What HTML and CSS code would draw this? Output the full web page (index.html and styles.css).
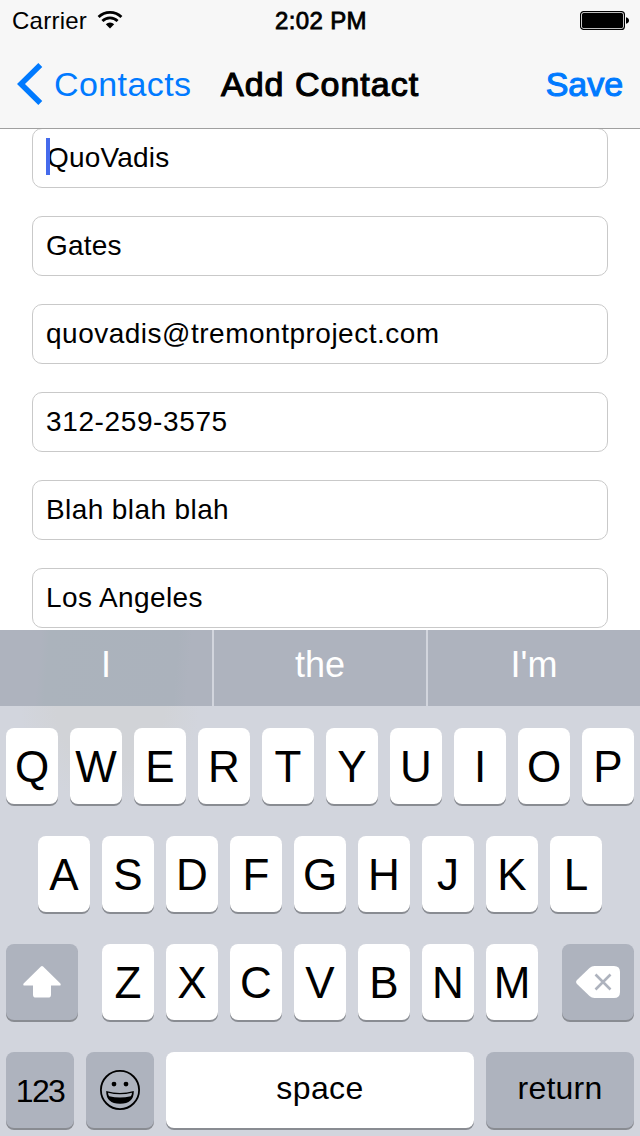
FILE: index.html
```html
<!DOCTYPE html>
<html lang="en">
<head>
<meta charset="utf-8">
<title>Add Contact</title>
<link rel="stylesheet" href="styles.css">
</head>
<body>
<div class="screen">
  <header class="header">
    <div class="status">
      <div class="status-left"><span class="carrier">Carrier</span>
        <svg class="wifi" width="26" height="20" viewBox="0 0 26 20"><g fill="none" stroke="#000" stroke-width="2.8"><path d="M1.6 7.1A16.2 16.2 0 0 1 24.4 7.1"/><path d="M5.4 11.1A10.8 10.8 0 0 1 20.6 11.1"/></g><path d="M8.8 14.2A6 6 0 0 1 17.2 14.2L13 18.6Z"/></svg>
      </div>
      <span class="time">2:02 PM</span>
      <svg class="battery" width="50" height="20" viewBox="0 0 50 20"><rect x=".6" y=".6" width="43.8" height="17.8" rx="3" fill="#fff" stroke="#000" stroke-width="1.2"/><rect x="2" y="2" width="41" height="15" rx="1.5"/><path d="M46 6.2Q49 7 49 9.5T46 12.8Z"/></svg>
    </div>
    <nav class="nav">
      <a class="back"><svg width="26" height="42" viewBox="0 0 26 42"><path d="M23.3 2L4 21L23.3 40" fill="none" stroke="#007aff" stroke-width="5.6"/></svg><span class="back-label">Contacts</span></a>
      <h1 class="title">Add Contact</h1>
      <a class="save">Save</a>
    </nav>
  </header>
  <main class="form">
    <div class="field first-name"><span class="caret"></span>QuoVadis</div>
    <div class="field last-name">Gates</div>
    <div class="field email">quovadis@tremontproject.com</div>
    <div class="field phone">312-259-3575</div>
    <div class="field">Blah blah blah</div>
    <div class="field">Los Angeles</div>
  </main>
  <section class="keyboard">
    <div class="suggestions"><div>I</div><div>the</div><div>I'm</div></div>
    <div class="keys">
      <div class="row"><b class="key">Q</b><b class="key">W</b><b class="key">E</b><b class="key">R</b><b class="key">T</b><b class="key">Y</b><b class="key">U</b><b class="key">I</b><b class="key">O</b><b class="key">P</b></div>
      <div class="row"><b class="key">A</b><b class="key">S</b><b class="key">D</b><b class="key">F</b><b class="key">G</b><b class="key">H</b><b class="key">J</b><b class="key">K</b><b class="key">L</b></div>
      <div class="row spread">
        <b class="key dark wide"><svg width="40" height="34" viewBox="0 0 40 34"><path fill="#fff" d="M18.9 1.6Q20 .6 21.1 1.6L38.4 18.4Q39.4 20.4 37.5 20.4H29V29.4Q29 32.6 26 32.6H14Q11 32.6 11 29.4V20.4H2.5Q.6 20.4 1.6 18.4Z"/></svg></b>
        <div class="row"><b class="key">Z</b><b class="key">X</b><b class="key">C</b><b class="key">V</b><b class="key">B</b><b class="key">N</b><b class="key">M</b></div>
        <b class="key dark wide"><svg width="44" height="34" viewBox="0 0 44 34"><path fill="#fff" d="M1 15L13.5 3Q15.7 1 18.5 1H38Q44 1 44 7V27Q44 33 38 33H18.5Q15.7 33 13.5 31L1 19Q-.8 17 1 15Z"/><path d="M19.5 9.5L34.5 24.5M34.5 9.5L19.5 24.5" stroke="#aeb3be" stroke-width="2.6"/></svg></b>
      </div>
      <div class="row">
        <b class="key dark numbers">123</b>
        <b class="key dark emoji"><svg width="40" height="40" viewBox="0 0 40 40"><circle cx="20" cy="20" r="19.1" fill="none" stroke="#000" stroke-width="1.8"/><circle cx="14" cy="14.1" r="2.4"/><circle cx="26" cy="14.1" r="2.4"/><path d="M6.2 21Q20 24.8 33.8 21Q34 33.8 20 33.8T6.2 21Z"/><path fill="#aeb3be" d="M8 22.7Q20 25.8 32 22.7Q31.8 25 30.8 26.3Q20 28.8 9.2 26.3Q8.2 25 8 22.7Z"/></svg></b>
        <b class="key space">space</b>
        <b class="key dark return">return</b>
      </div>
    </div>
  </section>
</div>
</body>
</html>
```
FILE: styles.css
```css
* { box-sizing: border-box; }
body { margin: 0; font-family: "Liberation Sans", Arial, sans-serif; color: #000; }
.screen { width: 640px; height: 1136px; overflow: hidden; background: #fff; display: flex; flex-direction: column; }
.header { height: 128px; background: #f7f7f7; box-shadow: 0 1px 0 #a0a0a0; position: relative; z-index: 1; }
.status { height: 40px; display: grid; grid-template-columns: 1fr auto 1fr; font-size: 24px; line-height: 41px; padding: 0 10px 0 12px; }
.status-left { display: flex; gap: 10px; }
.carrier { letter-spacing: .25px; }
.wifi { margin-top: 10px; }
.battery { justify-self: end; margin-top: 11px; }
.time, .title, .save { -webkit-text-stroke: 1.1px currentColor; }
.time { letter-spacing: .35px; -webkit-text-stroke-width: .8px; }
.nav { height: 88px; display: grid; grid-template-columns: 204px 1fr 204px; line-height: 88px; font-size: 34px; padding: 0 17px; }
.back { display: flex; align-items: center; gap: 11px; color: #007aff; }
.back-label { letter-spacing: .4px; }
.title { margin: 0; text-align: center; font-size: 34px; font-weight: 400; letter-spacing: 1px; white-space: nowrap; }
.save { text-align: right; color: #007aff; }
.form { height: 502px; padding: 0 32px; display: flex; flex-direction: column; gap: 28px; }
.field { flex: none; height: 60px; border: 1px solid #c9c9c9; border-radius: 10px; padding-left: 13px; font-size: 28px; line-height: 57px; letter-spacing: .4px; white-space: nowrap; position: relative; }
.first-name { padding-left: 14px; letter-spacing: .2px; }
.last-name { letter-spacing: .2px; }
.email { letter-spacing: .5px; }
.phone { letter-spacing: .62px; }
.caret { position: absolute; left: 13px; top: 9px; width: 4px; height: 37px; background: #456bec; }
.keyboard { height: 506px; background: #d2d5dd; }
.suggestions { height: 76px; display: grid; grid-template-columns: 212px 212px 212px; gap: 2px; background: #d2d5dd; color: #fff; font-size: 36px; line-height: 70px; text-align: center; }
.suggestions div { background: #aeb3be; }
.suggestions div:first-child { background: linear-gradient(95deg, #aeb3be 19%, #abb3bc 23%, #abb2bc 82%, #aeb3be 88%); }
.keys { padding: 22px 6px 0; display: flex; flex-direction: column; gap: 32px; background: radial-gradient(ellipse 90px 100px at 110px 0, #d1d3d7 60%, #d2d5dd 100%); }
.row { display: flex; justify-content: center; gap: 12px; }
.spread { justify-content: space-between; }
.key { flex: none; width: 52px; height: 76px; border-radius: 8px; background: #fff; box-shadow: 0 2px 0 #898c92; font-size: 44px; font-weight: 400; line-height: 78px; text-align: center; }
.dark { background: #aeb3be; }
.wide { width: 72px; display: flex; align-items: center; justify-content: center; }
.numbers { width: 68px; font-size: 32px; line-height: 78px; letter-spacing: -1.6px; }
.emoji { width: 68px; display: flex; align-items: center; justify-content: center; }
.space { width: 308px; font-size: 32px; line-height: 72px; letter-spacing: .4px; }
.return { width: 148px; font-size: 32px; line-height: 72px; letter-spacing: .2px; }
```
